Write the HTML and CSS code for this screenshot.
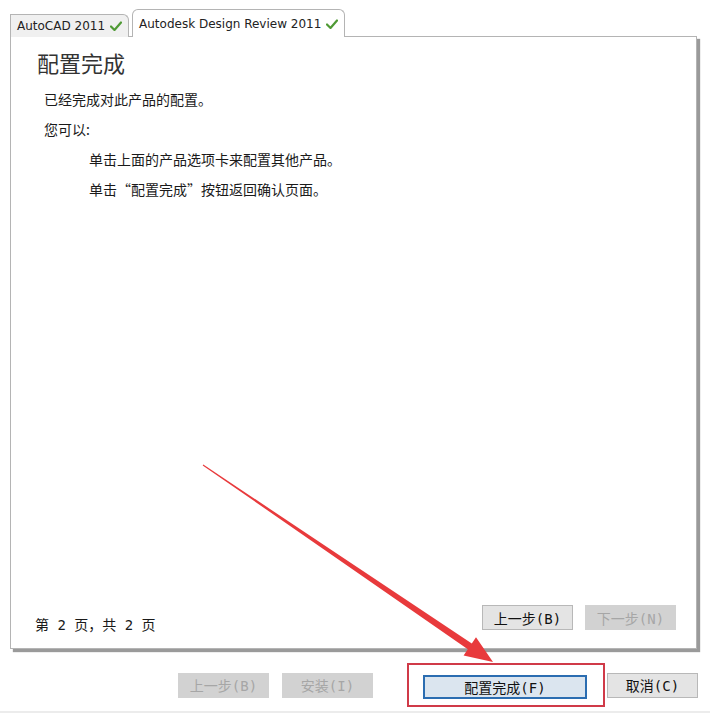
FILE: index.html
```html
<!DOCTYPE html>
<html lang="zh-CN">
<head>
    <meta charset="UTF-8">
    <title>配置完成</title>
    <link rel="stylesheet" href="styles.css">
</head>
<body>

    <div class="dialog">
        <div class="tabs">
            <div class="tab">AutoCAD 2011
                <svg class="check" viewBox="0 0 12 10"><path d="M1 5.5 L4.5 9 L11 1.5" /></svg>
            </div>
            <div class="tab active">Autodesk Design Review 2011
                <svg class="check" viewBox="0 0 12 10"><path d="M1 5.5 L4.5 9 L11 1.5" /></svg>
            </div>
        </div>

        <div class="panel">
            <h1>配置完成</h1>
            <p class="line">已经完成对此产品的配置。</p>
            <p class="line">您可以:</p>
            <p class="line sub">单击上面的产品选项卡来配置其他产品。</p>
            <p class="line sub">单击“配置完成”按钮返回确认页面。</p>

            <div class="panel-foot">
                <span class="page-info">第 2 页，共 2 页</span>
                <div class="nav">
                    <button class="btn">上一步(B)</button>
                    <button class="btn" disabled>下一步(N)</button>
                </div>
            </div>
        </div>

        <div class="actions">
            <button class="btn" disabled>上一步(B)</button>
            <button class="btn" disabled>安装(I)</button>
            <div class="highlight">
                <button class="btn primary">配置完成(F)</button>
            </div>
            <button class="btn">取消(C)</button>
        </div>
    </div>

    <!-- pointer to the finish button -->
    <svg class="arrow" width="710" height="713" viewBox="0 0 710 713">
        <polygon points="203.3,464.6 471.8,643.4 476,637.2 493,662 463.6,655.4 467.8,649.2 202.7,465.4" />
    </svg>

</body>
</html>
```

FILE: styles.css
```css
body {
    margin: 0;
    background: #ffffff;
    font-family: "Noto Sans CJK SC", "DejaVu Sans", sans-serif;
    color: #1a1a1a;
}
.dialog {
    width: 710px;
    height: 713px;
    padding: 10px 0 0 10px;
    box-sizing: border-box;
    border-bottom: 2px solid #ececec;
}
.tabs {
    display: flex;
    align-items: flex-end;
    gap: 3px;
    height: 27px;
    position: relative;
    z-index: 2;
    margin-bottom: -1px;
}
.tab {
    display: flex;
    align-items: center;
    gap: 5px;
    height: 22px;
    padding: 0 6px 0 6px;
    font-family: "DejaVu Sans", sans-serif;
    font-size: 12px;
    color: #222;
    background: #f0f0f0;
    border: 1px solid #b4b4b4;
    border-bottom: none;
    border-radius: 0 6px 0 0;
}
.tab.active {
    height: 27px;
    background: #ffffff;
    border-radius: 6px 6px 0 0;
    padding-right: 6px;
}
.check {
    width: 12px;
    height: 10px;
}
.check path {
    fill: none;
    stroke: #4f9a35;
    stroke-width: 2.2;
    stroke-linecap: round;
    stroke-linejoin: round;
}
.panel {
    width: 687px;
    height: 613px;
    box-sizing: border-box;
    border: 1px solid #b4b4b4;
    background: #ffffff;
    box-shadow: 3px 3px 1px #9a9a9a;
    padding: 10px 20px 15px 26px;
    display: flex;
    flex-direction: column;
}
h1 {
    margin: 0 0 7px 0;
    font-size: 22px;
    font-weight: normal;
    line-height: 30px;
    color: #333;
}
.line {
    margin: 0;
    font-size: 14px;
    line-height: 30px;
    padding-left: 7px;
}
.line.sub {
    padding-left: 52px;
}
.panel-foot {
    margin-top: auto;
    display: flex;
    align-items: flex-end;
    justify-content: space-between;
}
.page-info {
    font-family: "DejaVu Sans Mono", "Noto Sans CJK SC", monospace;
    font-size: 14px;
    margin-left: -2px;
    margin-bottom: -1px;
}
.nav {
    display: flex;
    gap: 12px;
    margin-bottom: 3px;
}
.btn {
    width: 91px;
    height: 25px;
    padding: 0;
    font-family: "DejaVu Sans Mono", "Noto Sans CJK SC", monospace;
    font-size: 14px;
    color: #111;
    background: #e4e4e4;
    border: 1px solid #b8b8b8;
}
.btn:disabled {
    color: #a6a6a6;
    background: #d2d2d2;
    border-color: #d2d2d2;
}
.actions {
    display: flex;
    align-items: center;
    margin-top: 14px;
    padding-left: 168px;
    gap: 13px;
}
.highlight {
    border: 2px solid #d03a48;
    padding: 9px 16px 6px 14px;
    margin-left: 21px;
    margin-right: -11px;
}
.highlight .btn.primary {
    width: 164px;
    height: 24px;
    background: #dbe5ef;
    border: 2px solid #2b6db1;
}
.arrow {
    position: absolute;
    left: 0;
    top: 0;
    pointer-events: none;
}
.arrow polygon {
    fill: #e83a3c;
}
```
